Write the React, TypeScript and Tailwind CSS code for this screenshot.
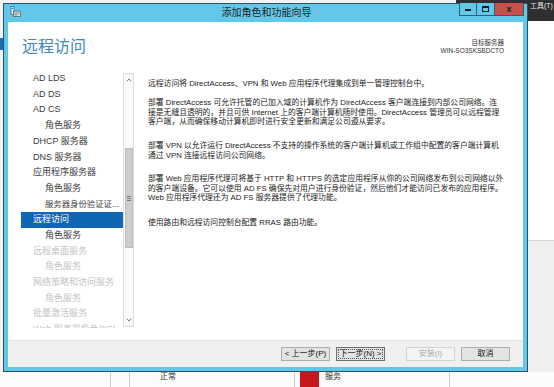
import React from 'react';

type NavItem = { label: string; level: 0 | 1; selected?: boolean; disabled?: boolean; small?: boolean };

const navItems: NavItem[] = [
    { label: 'AD LDS', level: 0 },
    { label: 'AD DS', level: 0 },
    { label: 'AD CS', level: 0 },
    { label: '角色服务', level: 1 },
    { label: 'DHCP 服务器', level: 0 },
    { label: 'DNS 服务器', level: 0 },
    { label: '应用程序服务器', level: 0 },
    { label: '角色服务', level: 1 },
    { label: '服务器身份验证证...', level: 1, small: true },
    { label: '远程访问', level: 0, selected: true },
    { label: '角色服务', level: 1 },
    { label: '远程桌面服务', level: 0, disabled: true },
    { label: '角色服务', level: 1, disabled: true },
    { label: '网络策略和访问服务', level: 0, disabled: true },
    { label: '角色服务', level: 1, disabled: true },
    { label: '批量激活服务', level: 0, disabled: true },
    { label: 'Web 服务器角色(IIS)', level: 0, disabled: true },
];

const paragraphs: { gap: string; lines: string[] }[] = [
    { gap: 'mt-0', lines: ['远程访问将 DirectAccess、VPN 和 Web 应用程序代理集成到单一管理控制台中。'] },
    {
        gap: 'mt-[9.5px]',
        lines: [
            '部署 DirectAccess 可允许托管的已加入域的计算机作为 DirectAccess 客户端连接到内部公司网络。连',
            '接是无缝且透明的，并且可供 Internet 上的客户端计算机随时使用。DirectAccess 管理员可以远程管理',
            '客户端，从而确保移动计算机即时进行安全更新和满足公司遵从要求。',
        ],
    },
    {
        gap: 'mt-[14.5px]',
        lines: [
            '部署 VPN 以允许运行 DirectAccess 不支持的操作系统的客户端计算机或工作组中配置的客户端计算机',
            '通过 VPN 连接远程访问公司网络。',
        ],
    },
    {
        gap: 'mt-[14px]',
        lines: [
            '部署 Web 应用程序代理可将基于 HTTP 和 HTTPS 的选定应用程序从你的公司网络发布到公司网络以外',
            '的客户端设备。它可以使用 AD FS 确保先对用户进行身份验证，然后他们才能访问已发布的应用程序。',
            'Web 应用程序代理还为 AD FS 服务器提供了代理功能。',
        ],
    },
    { gap: 'mt-[15.5px]', lines: ['使用路由和远程访问控制台配置 RRAS 路由功能。'] },
];

const WizardIcon = () => (
    <svg width="11" height="11" viewBox="0 0 11 11">
        <rect x="1" y="0.5" width="3" height="8" fill="#e8f4fb" stroke="#2f6f99" strokeWidth="0.8" />
        <rect x="1.8" y="2" width="1.4" height="1" fill="#2f6f99" />
        <rect x="3.5" y="5" width="7" height="5.5" fill="#d8dde2" stroke="#5b6670" strokeWidth="0.8" />
        <rect x="4.5" y="6.5" width="5" height="1" fill="#7d8892" />
        <rect x="4.5" y="8.3" width="3" height="1" fill="#7d8892" />
    </svg>
);

const Chevron = ({ up }: { up?: boolean }) => (
    <svg width="6" height="4" viewBox="0 0 6 4">
        <path d={up ? 'M0.8 3.3 L3 1 L5.2 3.3' : 'M0.8 0.7 L3 3 L5.2 0.7'} fill="none" stroke="#6a6a6a" strokeWidth="0.9" />
    </svg>
);

const App: React.FC = () => {
    return (
        <div className="relative w-[554px] h-[387px] overflow-hidden bg-[#f3f3f3] font-['Liberation_Sans','Noto_Sans_CJK_SC',sans-serif]">
            {/* Server Manager behind the wizard */}
            <div className="absolute left-[456px] top-0 w-[98px] h-[21px] bg-[#2f2f31]">
                <span className="absolute left-[74px] top-[1px] text-[7px] leading-[9px] text-[#e8e8e8] whitespace-nowrap">工具(T)</span>
            </div>
            <div className="absolute left-[528px] top-[21px] w-[26px] h-[219px] bg-white" />
            <div className="absolute left-[528px] top-[240px] w-[26px] h-[147px] bg-[#efefef] border-t border-[#d6d6d6]" />
            <div className="absolute left-0 top-[38px] w-[3px] h-[12px] bg-[#1b6db6]" />
            <div className="absolute left-0 top-[372px] w-[554px] h-[15px] bg-[#fbfbfb]" />
            <div className="absolute left-[110px] top-[372px] w-px h-[15px] bg-[#cfcfcf]" />
            <div className="absolute left-[129px] top-[372px] w-px h-[15px] bg-[#cfcfcf]" />
            <span className="absolute left-[160px] top-[372px] text-[8px] leading-[9px] text-[#333]">正常</span>
            <div className="absolute left-[294px] top-[372px] w-px h-[15px] bg-[#cfcfcf]" />
            <div className="absolute left-[300px] top-[371px] w-[19px] h-[16px] bg-[#c8161d]" />
            <span className="absolute left-[325px] top-[372px] text-[8px] leading-[9px] text-[#333]">服务</span>
            <div className="absolute left-[449px] top-[372px] w-px h-[15px] bg-[#cfcfcf]" />

            {/* Wizard window */}
            <div className="absolute left-[3px] top-[3px] w-[525px] h-[369px] border border-[#30515f] bg-[#62c8e9] flex flex-col px-[4px] pb-[4px]">
                {/* Title bar */}
                <div className="relative h-[18px] shrink-0 flex items-center justify-center">
                    <div className="absolute left-[2px] top-[2px]">
                        <WizardIcon />
                    </div>
                    <span className="text-[10px] leading-[12px] text-[#222] pl-[2px]">添加角色和功能向导</span>
                </div>
                <div className="absolute right-[3px] top-[-1px] h-[13px] flex border border-t-0 border-[#2d5e74]">
                    <div className="w-[17px] h-full bg-[#62c8e9] border-r border-[#2d5e74] flex items-center justify-center">
                        <div className="w-[6px] h-[2px] bg-[#1a1a1a] mt-[2px]" />
                    </div>
                    <div className="w-[18px] h-full bg-[#62c8e9] border-r border-[#2d5e74] flex items-center justify-center">
                        <div className="w-[7px] h-[6px] border border-t-2 border-[#1a1a1a]" />
                    </div>
                    <div className="w-[28px] h-full bg-[#c7504b] flex items-center justify-center">
                        <span className="text-[9px] leading-[9px] font-bold text-[#1a1a1a]">x</span>
                    </div>
                </div>

                {/* Client area */}
                <div className="flex-1 flex flex-col bg-white">
                    <div className="h-[318px] shrink-0 flex flex-col">
                        {/* Header */}
                        <div className="h-[49px] shrink-0 flex justify-between">
                            <h1 className="pl-[14px] pt-[17px] text-[16px] leading-[16px] font-normal text-[#4189ba]">远程访问</h1>
                            <div className="pr-[19px] pt-[17px] flex flex-col items-end text-[6.5px] leading-[8px] text-[#333]">
                                <span>目标服务器</span>
                                <span>WIN-SO3SKSBDCTO</span>
                            </div>
                        </div>

                        {/* Body */}
                        <div className="flex-1 flex">
                            {/* Navigation */}
                            <div className="ml-[13px] w-[113px] h-[257px] flex">
                                <div className="w-[102px] h-full overflow-hidden">
                                    {navItems.map((item, i) => (
                                        <div
                                            key={i}
                                            className={`h-[15.7px] flex items-center whitespace-nowrap ${
                                                item.small ? 'text-[8.4px]' : 'text-[9px]'
                                            } ${item.level === 1 ? 'pl-[24px]' : 'pl-[12px]'} ${
                                                item.selected
                                                    ? 'bg-[#0f66b5] text-white'
                                                    : item.disabled
                                                    ? 'text-[#c4c4c4]'
                                                    : 'text-[#3c3c3c]'
                                            }`}
                                        >
                                            {item.label}
                                        </div>
                                    ))}
                                </div>
                                {/* Scrollbar */}
                                <div className="mt-[2px] w-[11px] h-[254px] border border-[#dcdcdc] bg-[#fafafa] flex flex-col">
                                    <div className="h-[12px] flex items-center justify-center">
                                        <Chevron up />
                                    </div>
                                    <div className="mt-[62px] mx-[0.5px] h-[100px] bg-[#cdcdcd] border border-[#bdbdbd] flex flex-col items-center justify-center gap-[1px]">
                                        <div className="w-[4px] h-px bg-[#7a7a7a]" />
                                        <div className="w-[4px] h-px bg-[#7a7a7a]" />
                                        <div className="w-[4px] h-px bg-[#7a7a7a]" />
                                    </div>
                                    <div className="flex-1" />
                                    <div className="h-[12px] flex items-center justify-center">
                                        <Chevron />
                                    </div>
                                </div>
                            </div>

                            {/* Description */}
                            <div className="ml-[14px] pt-[8.25px] text-[7.8px] text-[#222]">
                                {paragraphs.map((p, i) => (
                                    <div key={i} className={p.gap}>
                                        {p.lines.map((line, j) => (
                                            <div key={j} className="h-[9.5px] leading-[9.5px] whitespace-nowrap">
                                                {line}
                                            </div>
                                        ))}
                                    </div>
                                ))}
                            </div>
                        </div>
                    </div>

                    {/* Footer */}
                    <div className="flex-1 bg-[#f0f0f0] border-t border-[#e2e2e2] flex items-center justify-end pr-[13px] text-[8px]">
                        <button className="w-[49px] h-[14px] bg-[#e3e3e3] border border-[#adadad] text-[#111] leading-[12px]">&lt; 上一步(P)</button>
                        <button className="ml-[6px] w-[49px] h-[14px] bg-[#e3e3e3] border border-[#6f6f6f] text-[#111] leading-[12px] outline-1 outline-dotted outline-[#555] -outline-offset-[3px]">下一步(N) &gt;</button>
                        <button className="ml-[21px] w-[49px] h-[14px] bg-[#f4f4f4] border border-[#d3d3d3] text-[#a8a8a8] leading-[12px]">安装(I)</button>
                        <button className="ml-[6px] w-[49px] h-[14px] bg-[#e3e3e3] border border-[#adadad] text-[#111] leading-[12px]">取消</button>
                    </div>
                </div>
            </div>
        </div>
    );
};

export default App;
